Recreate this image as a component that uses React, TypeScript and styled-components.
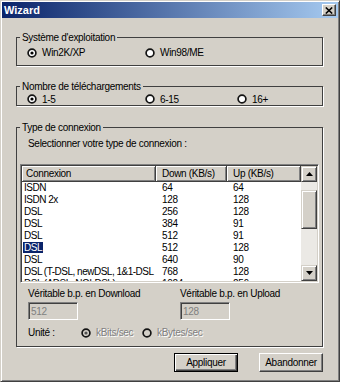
import styled, { createGlobalStyle } from 'styled-components';

const GlobalStyle = createGlobalStyle`
  html, body {
    margin: 0;
    padding: 0;
    background: #d4d0c8;
  }
  body {
    font-family: 'Liberation Sans', Arial, sans-serif;
    font-size: 10px;
    letter-spacing: -0.3px;
    color: #000;
  }
`;

const Window = styled.div`
  width: 340px;
  height: 382px;
  box-sizing: border-box;
  display: flex;
  flex-direction: column;
  padding: 1px;
  background: #d4d0c8;
  border: 1px solid;
  border-color: #d4d0c8 #404040 #404040 #d4d0c8;
  box-shadow: inset 1px 1px 0 #fff, inset -1px -1px 0 #808080;
`;

const TitleBar = styled.div`
  height: 16px;
  display: flex;
  align-items: center;
  justify-content: space-between;
  padding: 0 2px 0 2px;
  background: linear-gradient(to right, #0a246a, #a6caf0);
  color: #fff;
  font-weight: bold;
  font-size: 11px;
  letter-spacing: 0;
`;

const CloseButton = styled.div`
  width: 14px;
  height: 12px;
  box-sizing: border-box;
  display: flex;
  align-items: center;
  justify-content: center;
  background: #d4d0c8;
  border: 1px solid;
  border-color: #fff #404040 #404040 #fff;
  box-shadow: inset -1px -1px 0 #808080;
`;

const Body = styled.div`
  display: flex;
  flex-direction: column;
  padding: 13px 15px 0 14px;
`;

const Group = styled.fieldset<{ $pt: number; $pb: number; $mt?: number }>`
  margin: ${({ $mt }) => $mt || 0}px 0 0 0;
  min-width: 0;
  border: 1px solid #404040;
  box-shadow: 1px 1px 0 #fff;
  padding: ${({ $pt }) => $pt}px 3px ${({ $pb }) => $pb}px 3px;
`;

const Legend = styled.legend`
  padding: 0 2px;
  margin: 0;
  line-height: 13px;
`;

const RadioRow = styled.div<{ $h: number }>`
  display: flex;
  align-items: center;
  height: ${({ $h }) => $h}px;
  padding-left: 7px;
`;

const Option = styled.label<{ $w?: number; $disabled?: boolean }>`
  display: flex;
  align-items: center;
  gap: 5px;
  ${({ $w }) => ($w ? `width: ${$w}px;` : '')}
  color: ${({ $disabled }) => ($disabled ? '#808080' : '#000')};
  ${({ $disabled }) => $disabled && 'text-shadow: 1px 1px 0 #fff;'}
  line-height: 13px;
  white-space: nowrap;
`;

const Caption = styled.div<{ $mt?: number }>`
  margin: ${({ $mt }) => $mt || 0}px 0 0 8px;
  line-height: 13px;
`;

const ListView = styled.div`
  margin-top: 14px;
  height: 119px;
  box-sizing: border-box;
  display: flex;
  padding: 1px;
  background: #fff;
  border: 1px solid;
  border-color: #808080 #fff #fff #808080;
  box-shadow: inset 1px 1px 0 #404040, inset -1px -1px 0 #d4d0c8;
`;

const Table = styled.div`
  flex: 1;
  display: flex;
  flex-direction: column;
  overflow: hidden;
  background: #fff;
`;

const cols = '134px 71px 1fr';

const HeaderRow = styled.div`
  display: grid;
  grid-template-columns: ${cols};
  height: 16px;
  flex-shrink: 0;
`;

const HeaderCell = styled.div<{ $first?: boolean }>`
  box-sizing: border-box;
  padding: 1px 0 0 ${({ $first }) => ($first ? 4 : 6)}px;
  line-height: 14px;
  background: #d4d0c8;
  border-right: 1px solid #404040;
  border-bottom: 1px solid #404040;
  box-shadow: inset 1px 1px 0 #fff, inset -1px -1px 0 #808080;
  white-space: nowrap;
  overflow: hidden;
`;

const Row = styled.div`
  display: grid;
  grid-template-columns: ${cols};
  height: 12px;
  line-height: 12px;
  flex-shrink: 0;
`;

const Cell = styled.div<{ $first?: boolean }>`
  padding-left: ${({ $first }) => ($first ? 2 : 6)}px;
  ${({ $first }) => $first && 'letter-spacing: -0.5px;'}
  white-space: nowrap;
  overflow: hidden;
`;

const Selected = styled.span`
  display: inline-block;
  margin-left: -1px;
  padding: 0 1px;
  line-height: 11px;
  background: #0a246a;
  color: #fff;
`;

const ScrollBar = styled.div`
  width: 16px;
  display: flex;
  flex-direction: column;
`;

const ScrollButton = styled.div`
  height: 16px;
  box-sizing: border-box;
  display: flex;
  align-items: center;
  justify-content: center;
  background: #d4d0c8;
  border: 1px solid;
  border-color: #d4d0c8 #404040 #404040 #d4d0c8;
  box-shadow: inset 1px 1px 0 #fff, inset -1px -1px 0 #808080;
`;

const Track = styled.div`
  flex: 1;
  padding-top: 8px;
  background: #ebe9e5;
`;

const Thumb = styled(ScrollButton)`
  height: 39px;
`;

const FieldGrid = styled.div<{ $mt: number }>`
  display: grid;
  grid-template-columns: 152px 1fr;
  margin: ${({ $mt }) => $mt}px 0 0 8px;
  line-height: 13px;
`;

const TextBox = styled.input`
  width: 50px;
  height: 18px;
  box-sizing: border-box;
  margin: 0;
  padding: 0 2px;
  font: inherit;
  letter-spacing: inherit;
  color: #808080;
  -webkit-text-fill-color: #808080;
  background: #d4d0c8;
  border: 1px solid;
  border-color: #808080 #fff #fff #808080;
  box-shadow: inset 1px 1px 0 #404040, inset -1px -1px 0 #d4d0c8;
  outline: none;
`;

const UnitRow = styled.div`
  display: flex;
  align-items: center;
  margin: 6px 0 0 8px;
  height: 13px;
`;

const UnitLabel = styled.span`
  width: 53px;
`;

const ButtonRow = styled.div`
  display: flex;
  justify-content: flex-end;
  gap: 21px;
  margin-top: 6px;
`;

const Button = styled.button<{ $default?: boolean }>`
  width: 64px;
  height: 19px;
  box-sizing: border-box;
  margin: 0;
  padding: 0;
  font: inherit;
  letter-spacing: inherit;
  color: #000;
  background: #d4d0c8;
  border: 1px solid;
  border-color: ${({ $default }) => ($default ? '#000' : '#fff #404040 #404040 #fff')};
  box-shadow: ${({ $default }) =>
    $default
      ? 'inset 1px 1px 0 #fff, inset -1px -1px 0 #404040, inset -2px -2px 0 #808080'
      : 'inset -1px -1px 0 #808080'};
`;

const Radio = ({ checked, disabled }: { checked?: boolean; disabled?: boolean }) => (
  <svg width="10" height="10" viewBox="0 0 10 10">
    <circle cx="5" cy="5" r="3.9" fill={disabled ? '#d4d0c8' : '#fff'} stroke="#141414" strokeWidth="1.7" />
    {checked && <circle cx="5" cy="5" r="1.6" fill={disabled ? '#505050' : '#000'} />}
  </svg>
);

const Arrow = ({ down }: { down?: boolean }) => (
  <svg width="7" height="4" viewBox="0 0 7 4">
    <path d={down ? 'M0 0h7L3.5 4z' : 'M0 4h7L3.5 0z'} fill="#000" />
  </svg>
);

const rows = [
  ['ISDN', '64', '64'],
  ['ISDN 2x', '128', '128'],
  ['DSL', '256', '128'],
  ['DSL', '384', '91'],
  ['DSL', '512', '91'],
  ['DSL', '512', '128'],
  ['DSL', '640', '90'],
  ['DSL (T-DSL, newDSL, 1&1-DSL', '768', '128'],
  ['DSL (ADSL, NGI-DSL)', '1024', '256'],
];

const selectedRow = 5;

const App = () => {
  return (
    <>
      <GlobalStyle />
      <Window>
        <TitleBar>
          <span>Wizard</span>
          <CloseButton>
            <svg width="8" height="7" viewBox="0 0 8 7">
              <path d="M0.8 0.5L7.2 6.5M7.2 0.5L0.8 6.5" stroke="#000" strokeWidth="1.6" />
            </svg>
          </CloseButton>
        </TitleBar>
        <Body>
          <Group $pt={2} $pb={6}>
            <Legend>Système d'exploitation</Legend>
            <RadioRow $h={13}>
              <Option $w={118}>
                <Radio checked />
                Win2K/XP
              </Option>
              <Option>
                <Radio />
                Win98/ME
              </Option>
            </RadioRow>
          </Group>

          <Group $pt={0} $pb={0} $mt={14}>
            <Legend>Nombre de téléchargements</Legend>
            <RadioRow $h={12}>
              <Option $w={118}>
                <Radio checked />
                1-5
              </Option>
              <Option $w={92}>
                <Radio />
                6-15
              </Option>
              <Option>
                <Radio />
                16+
              </Option>
            </RadioRow>
          </Group>

          <Group $pt={3} $pb={7} $mt={15}>
            <Legend>Type de connexion</Legend>
            <Caption>Selectionner votre type de connexion :</Caption>
            <ListView>
              <Table>
                <HeaderRow>
                  <HeaderCell $first>Connexion</HeaderCell>
                  <HeaderCell>Down (KB/s)</HeaderCell>
                  <HeaderCell>Up (KB/s)</HeaderCell>
                </HeaderRow>
                {rows.map((row, index) => (
                  <Row key={index}>
                    <Cell $first>
                      {index === selectedRow ? <Selected>{row[0]}</Selected> : row[0]}
                    </Cell>
                    <Cell>{row[1]}</Cell>
                    <Cell>{row[2]}</Cell>
                  </Row>
                ))}
              </Table>
              <ScrollBar>
                <ScrollButton>
                  <Arrow />
                </ScrollButton>
                <Track>
                  <Thumb />
                </Track>
                <ScrollButton>
                  <Arrow down />
                </ScrollButton>
              </ScrollBar>
            </ListView>
            <FieldGrid $mt={4}>
              <span>Véritable b.p. en Download</span>
              <span>Véritable b.p. en Upload</span>
            </FieldGrid>
            <FieldGrid $mt={2}>
              <TextBox disabled value="512" readOnly />
              <TextBox disabled value="128" readOnly />
            </FieldGrid>
            <UnitRow>
              <UnitLabel>Unité :</UnitLabel>
              <Option $w={61} $disabled>
                <Radio checked disabled />
                kBits/sec
              </Option>
              <Option $disabled>
                <Radio disabled />
                kBytes/sec
              </Option>
            </UnitRow>
          </Group>

          <ButtonRow>
            <Button $default>Appliquer</Button>
            <Button>Abandonner</Button>
          </ButtonRow>
        </Body>
      </Window>
    </>
  );
};

export default App;
